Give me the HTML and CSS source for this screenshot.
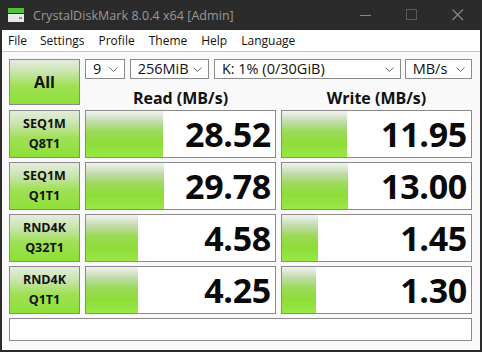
FILE: index.html
```html
<!DOCTYPE html>
<html>
<head>
<meta charset="utf-8">
<link rel="stylesheet" href="styles.css">
</head>
<body>
<div class="window">
  <div class="titlebar">
    <svg class="appicon" width="16" height="16" viewBox="0 0 16 16">
      <rect x="0" y="1" width="16" height="5" fill="#4fc23a"/>
      <rect x="0" y="7" width="16" height="8" fill="#e8e8e8"/>
      <rect x="11" y="10" width="3" height="2" fill="#4fc23a"/>
    </svg>
    <span class="title">CrystalDiskMark 8.0.4 x64 [Admin]</span>
    <div class="controls">
      <svg width="12" height="12" viewBox="0 0 12 12"><line x1="0" y1="6.5" x2="11" y2="6.5" stroke="#8a8a8a" stroke-width="1"/></svg>
      <svg width="12" height="12" viewBox="0 0 12 12"><rect x="0.5" y="0.5" width="10" height="10" fill="none" stroke="#5a5a5a" stroke-width="1"/></svg>
      <svg width="12" height="12" viewBox="0 0 12 12"><path d="M0.5 0.5 L11 11 M11 0.5 L0.5 11" stroke="#8a8a8a" stroke-width="1.1"/></svg>
    </div>
  </div>
  <div class="menubar">
    <span>File</span><span>Settings</span><span>Profile</span><span>Theme</span><span>Help</span><span>Language</span>
  </div>
  <div class="main">
    <div class="grid">
      <div class="btn all">All</div>
      <div class="topright">
        <div class="combos">
          <div class="combo c1"><span>9</span><svg width="9" height="5" viewBox="0 0 9 5"><path d="M0.5 0.5 L4.5 4.5 L8.5 0.5" fill="none" stroke="#666" stroke-width="1"/></svg></div>
          <div class="combo c2"><span>256MiB</span><svg width="9" height="5" viewBox="0 0 9 5"><path d="M0.5 0.5 L4.5 4.5 L8.5 0.5" fill="none" stroke="#666" stroke-width="1"/></svg></div>
          <div class="combo c3"><span>K: 1% (0/30GiB)</span><svg width="9" height="5" viewBox="0 0 9 5"><path d="M0.5 0.5 L4.5 4.5 L8.5 0.5" fill="none" stroke="#666" stroke-width="1"/></svg></div>
          <div class="combo c4"><span>MB/s</span><svg width="9" height="5" viewBox="0 0 9 5"><path d="M0.5 0.5 L4.5 4.5 L8.5 0.5" fill="none" stroke="#666" stroke-width="1"/></svg></div>
        </div>
        <div class="headers">
          <div class="hdr">Read (MB/s)</div>
          <div class="hdr">Write (MB/s)</div>
        </div>
      </div>

      <div class="btn label">SEQ1M<br>Q8T1</div>
      <div class="cell"><div class="bar" style="width:77px"></div><span class="val">28.52</span></div>
      <div class="cell"><div class="bar" style="width:65px"></div><span class="val">11.95</span></div>

      <div class="btn label">SEQ1M<br>Q1T1</div>
      <div class="cell"><div class="bar" style="width:78px"></div><span class="val">29.78</span></div>
      <div class="cell"><div class="bar" style="width:66px"></div><span class="val">13.00</span></div>

      <div class="btn label">RND4K<br>Q32T1</div>
      <div class="cell"><div class="bar" style="width:52px"></div><span class="val">4.58</span></div>
      <div class="cell"><div class="bar" style="width:36px"></div><span class="val">1.45</span></div>

      <div class="btn label">RND4K<br>Q1T1</div>
      <div class="cell"><div class="bar" style="width:52px"></div><span class="val">4.25</span></div>
      <div class="cell"><div class="bar" style="width:34px"></div><span class="val">1.30</span></div>

      <div class="comment"></div>
    </div>
  </div>
</div>
</body>
</html>
```
FILE: styles.css
```css
* { box-sizing: border-box; }
html, body {
  margin: 0;
  padding: 0;
  width: 482px;
  height: 352px;
  overflow: hidden;
  background: #2b2b2b;
  font-family: "Open Sans", "Noto Sans", sans-serif;
}
.window {
  width: 482px;
  height: 352px;
  background: #2b2b2b;
  display: flex;
  flex-direction: column;
  padding: 0 2px 2px 2px;
}
.titlebar {
  height: 30px;
  display: flex;
  align-items: center;
  color: #9a9a9a;
  font-size: 12.5px;
  padding-left: 6px;
}
.appicon { margin-right: 9px; margin-top: -1px; }
.title { flex: 1; letter-spacing: 0.05px; }
.controls {
  display: flex;
  gap: 34px;
  padding-right: 16px;
  align-items: center;
}
.menubar {
  height: 22px;
  background: #ffffff;
  border-bottom: 1px solid #c8c8c8;
  display: flex;
  align-items: center;
  gap: 14px;
  padding-left: 6px;
  font-size: 12px;
  color: #111;
}
.menubar span:nth-child(2) { margin-left: -1px; }
.main {
  flex: 1;
  background: #f9f9f9;
  padding: 7px 8px 8px 7px;
}
.grid {
  display: grid;
  grid-template-columns: 71px 191px 191px;
  grid-template-rows: 47px 48px 48px 48px 48px 23px;
  column-gap: 5px;
  row-gap: 4px;
}
.btn {
  border: 1px solid #8a8a8a;
  background: linear-gradient(#e4ecde 0%, #c6e4a8 30%, #9ee052 60%, #8ee03a 100%);
  display: flex;
  align-items: center;
  justify-content: center;
  text-align: center;
  font-weight: 700;
  color: #111;
}
.btn.all { font-size: 16px; margin-bottom: 1px; }
.btn.label { font-size: 12.5px; line-height: 20px; }
.topright {
  grid-column: 2 / 4;
  display: flex;
  flex-direction: column;
}
.combos {
  display: flex;
  height: 23px;
  gap: 5px;
}
.combo {
  border: 1px solid #8a8a8a;
  background: #fff;
  display: flex;
  align-items: center;
  justify-content: space-between;
  padding: 0 6px 0 7px;
  font-size: 14.5px;
  color: #111;
}
.combo span { margin-top: -1px; }
.c1 { width: 40px; }
.c2 { width: 80px; }
.c3 { width: 189px; }
.c4 { width: 68px; margin-left: -1px; }
.headers {
  flex: 1;
  display: grid;
  grid-template-columns: 191px 191px;
  column-gap: 5px;
  align-items: center;
}
.hdr {
  text-align: center;
  font-weight: 700;
  font-size: 16px;
  color: #111;
  padding-top: 8px;
}
.cell {
  position: relative;
  border: 1px solid #8a8a8a;
  background: #fff;
  display: flex;
  align-items: center;
  justify-content: flex-end;
  padding-right: 4px;
}
.bar {
  position: absolute;
  left: 0;
  top: 0;
  bottom: 0;
  background: linear-gradient(#f2f2f2 0%, #c4dcb0 22%, #9cda5a 45%, #8edc38 70%, #9ae846 100%);
}
.val {
  position: relative;
  font-size: 34px;
  font-weight: 700;
  color: #0a0a0a;
  letter-spacing: -0.3px;
  margin-top: -1px;
}
.comment {
  grid-column: 1 / 4;
  border: 1px solid #8a8a8a;
  background: #fff;
}
```
